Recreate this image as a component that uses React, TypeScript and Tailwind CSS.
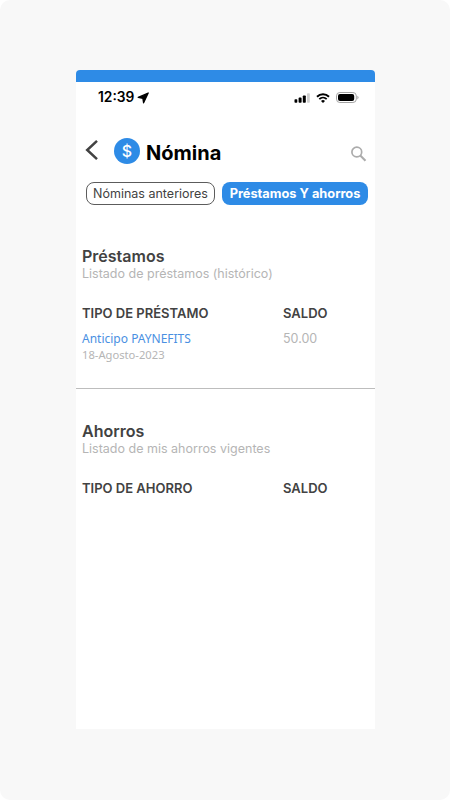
import React from 'react';

interface SectionHeaderProps {
  title: string;
  subtitle: string;
  column: string;
}

const SectionHeader: React.FC<SectionHeaderProps> = ({ title, subtitle, column }) => (
  <>
    <h2 className="text-[16px] leading-[20px] font-semibold text-[#424242]">{title}</h2>
    <p className="text-[12.5px] leading-[16px] text-[#b5b5b5]">{subtitle}</p>
    <div className="mt-[23px] flex text-[13px] leading-[16px] font-semibold text-[#424242]">
      <span className="w-[201px]">{column}</span>
      <span>SALDO</span>
    </div>
  </>
);

const StatusBar: React.FC = () => (
  <div className="flex h-[31px] items-center justify-between pl-[22px] pr-[16px]">
    <div className="flex items-center gap-[3px] text-[13.8px] font-semibold text-black">
      <span>12:39</span>
      <svg width="12" height="12" viewBox="0 0 12 12">
        <path d="M11.2 1 6.6 10.8 5.9 6.3 1.2 5.4Z" fill="#000" stroke="#000" strokeWidth="1.3" strokeLinejoin="round" />
      </svg>
    </div>
    <div className="flex items-center">
      <svg width="16" height="10" viewBox="0 0 16 10">
        <rect x="0.5" y="6.2" width="2.8" height="3.6" rx="0.8" />
        <rect x="4.6" y="4.6" width="3" height="5.2" rx="0.8" />
        <rect x="8.8" y="2.4" width="3" height="7.4" rx="0.8" />
        <rect x="13" y="0.2" width="2.8" height="9.6" rx="0.8" fill="#cfcfcf" />
      </svg>
      <svg className="ml-[6px]" width="14" height="10" viewBox="0 0 14 10">
        <path d="M1 3.8a8.6 8.6 0 0 1 12 0" fill="none" stroke="#000" strokeWidth="2" />
        <path d="M3.3 6.2a5.3 5.3 0 0 1 7.4 0" fill="none" stroke="#000" strokeWidth="1.8" />
        <path d="M7 9.9 5 7.9a2.9 2.9 0 0 1 4 0Z" />
      </svg>
      <svg className="ml-[6px]" width="23" height="12" viewBox="0 0 23 12">
        <rect x="0.5" y="0.5" width="19.8" height="10" rx="3.4" fill="none" stroke="#a3a3a3" />
        <rect x="2" y="2" width="16.2" height="7" rx="2" />
        <path d="M21.4 3.8v3.6a2 2 0 0 0 0-3.6Z" fill="#a3a3a3" />
      </svg>
    </div>
  </div>
);

export default function App() {
  return (
    <div className="h-[800px] w-[450px] bg-white font-['Inter',sans-serif]">
      <div className="h-full w-full rounded-[10px] bg-[#f8f8f8] pl-[76px] pt-[70px]">
        <div className="flex h-[659px] w-[299px] flex-col overflow-hidden rounded-t-[4px] bg-white">
          <div className="h-[12px] shrink-0 bg-[#2e8be6]" />
          <StatusBar />

          <header className="mt-[23px] flex h-[30px] items-center pl-[9px] pr-[8px]">
            <svg className="mt-[-2px]" width="14" height="22" viewBox="0 0 14 22">
              <path d="M12 1.8 2.2 11l9.8 9.2" fill="none" stroke="#424242" strokeWidth="2.5" />
            </svg>
            <div className="ml-[15px] flex h-[26px] w-[26px] items-center justify-center rounded-full bg-[#2e8be6] pb-[1px] text-[16px] leading-none font-medium text-white">
              $
            </div>
            <h1 className="ml-[6px] mt-[3px] text-[20px] leading-[28px] font-bold text-black">Nómina</h1>
            <svg className="ml-auto mt-[5px]" width="17" height="16" viewBox="0 0 17 16" fill="none" stroke="#acacac">
              <circle cx="6.8" cy="6" r="4.9" strokeWidth="1.7" />
              <path d="m10.3 9.5 5.2 5.2" strokeWidth="2.1" />
            </svg>
          </header>

          <nav className="mt-[16px] flex gap-[7px] pl-[10px]">
            <button className="flex h-[23px] w-[129px] items-center justify-center whitespace-nowrap rounded-[8px] border border-[#5c5c5c] pt-[1px] text-[12.5px] text-[#424242]">
              Nóminas anteriores
            </button>
            <button className="flex h-[23px] w-[146px] items-center justify-center whitespace-nowrap rounded-[8px] bg-[#2e8be6] text-[12.8px] font-bold text-white">
              Préstamos Y ahorros
            </button>
          </nav>

          <section className="mt-[41px] h-[143px] border-b border-[#bdbdbd] pl-[6px]">
            <SectionHeader
              title="Préstamos"
              subtitle="Listado de préstamos (histórico)"
              column="TIPO DE PRÉSTAMO"
            />
            <div className="mt-[8px] flex">
              <div className="w-[201px] pt-[1px] font-['Noto_Sans',sans-serif]">
                <p className="text-[12px] leading-[18px] text-[#4a90e2]">Anticipo PAYNEFITS</p>
                <p className="mt-[-1px] text-[11.2px] leading-[16px] text-[#b5b5b5]">18-Agosto-2023</p>
              </div>
              <span className="text-[12.5px] leading-[19px] text-[#b5b5b5]">50.00</span>
            </div>
          </section>

          <section className="mt-[32px] pl-[6px]">
            <SectionHeader
              title="Ahorros"
              subtitle="Listado de mis ahorros vigentes"
              column="TIPO DE AHORRO"
            />
          </section>
        </div>
      </div>
    </div>
  );
}
